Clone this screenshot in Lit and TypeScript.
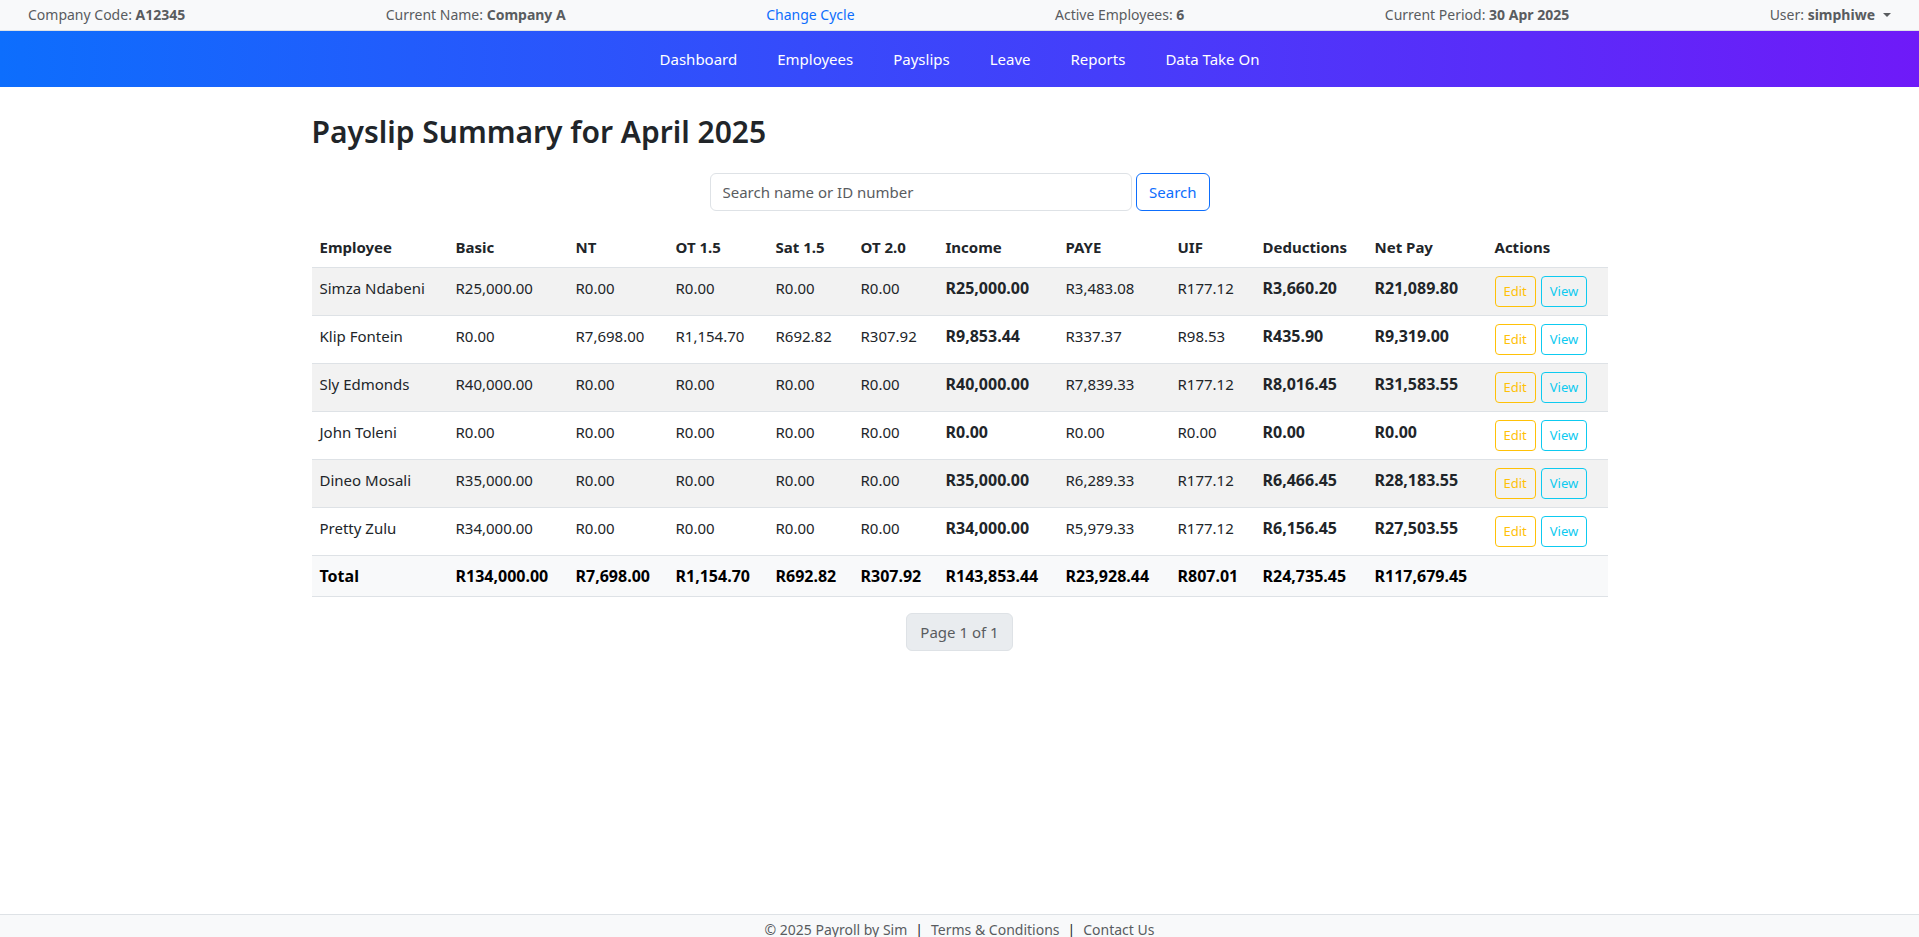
import { LitElement, html, css } from "lit";
import { customElement } from "lit/decorators.js";

type Row = { name: string; cells: string[] };

const columns = [
  "Employee", "Basic", "NT", "OT 1.5", "Sat 1.5", "OT 2.0",
  "Income", "PAYE", "UIF", "Deductions", "Net Pay", "Actions",
];

const colSizes = [
  "col-name", "col-sum", "col-hours", "col-hours", "col-rate", "col-rate",
  "col-sum", "col-tax", "col-rate", "col-tax", "col-sum", "col-actions",
];

// Index of the cells that are set in bold: Income, Deductions, Net Pay.
const strongCells = new Set([5, 8, 9]);

const rows: Row[] = [
  { name: "Simza Ndabeni", cells: ["R25,000.00", "R0.00", "R0.00", "R0.00", "R0.00", "R25,000.00", "R3,483.08", "R177.12", "R3,660.20", "R21,089.80"] },
  { name: "Klip Fontein", cells: ["R0.00", "R7,698.00", "R1,154.70", "R692.82", "R307.92", "R9,853.44", "R337.37", "R98.53", "R435.90", "R9,319.00"] },
  { name: "Sly Edmonds", cells: ["R40,000.00", "R0.00", "R0.00", "R0.00", "R0.00", "R40,000.00", "R7,839.33", "R177.12", "R8,016.45", "R31,583.55"] },
  { name: "John Toleni", cells: ["R0.00", "R0.00", "R0.00", "R0.00", "R0.00", "R0.00", "R0.00", "R0.00", "R0.00", "R0.00"] },
  { name: "Dineo Mosali", cells: ["R35,000.00", "R0.00", "R0.00", "R0.00", "R0.00", "R35,000.00", "R6,289.33", "R177.12", "R6,466.45", "R28,183.55"] },
  { name: "Pretty Zulu", cells: ["R34,000.00", "R0.00", "R0.00", "R0.00", "R0.00", "R34,000.00", "R5,979.33", "R177.12", "R6,156.45", "R27,503.55"] },
];

const totals = ["R134,000.00", "R7,698.00", "R1,154.70", "R692.82", "R307.92", "R143,853.44", "R23,928.44", "R807.01", "R24,735.45", "R117,679.45"];

const navItems = ["Dashboard", "Employees", "Payslips", "Leave", "Reports", "Data Take On"];

@customElement("app-root")
export class AppRoot extends LitElement {
  static styles = css`
    :host {
      display: flex;
      flex-direction: column;
      min-height: 100vh;
      background: #fff;
      color: #212529;
      font-family: "Noto Sans", "Open Sans", sans-serif;
      font-size: 15px;
      line-height: 24px;
    }
    * { box-sizing: border-box; }
    a { text-decoration: none; color: inherit; }
    button, input { font: inherit; }

    .topbar {
      display: flex;
      justify-content: space-between;
      padding: 4px 28px 5px;
      background: #f8f9fa;
      border-bottom: 1px solid #dee2e6;
      color: #595c5f;
      font-size: 14px;
      line-height: 21px;
    }
    .topbar .cycle { color: #0d6efd; }
    .user {
      display: flex;
      align-items: center;
      gap: 8px;
      padding: 0;
      border: 0;
      background: none;
      color: inherit;
      line-height: 21px;
    }
    .caret {
      border-top: 4px solid currentColor;
      border-left: 4px solid transparent;
      border-right: 4px solid transparent;
    }

    .nav {
      display: flex;
      justify-content: center;
      gap: 40px;
      padding: 16px;
      background: linear-gradient(90deg, #0d6efd, #6f1af8);
      color: #fff;
    }

    .main {
      flex: 1;
      width: 100%;
      max-width: 1320px;
      margin: 0 auto;
      padding: 26px 12px;
    }
    .title {
      margin: 0 0 22px;
      font-size: 30px;
      line-height: 38px;
      font-weight: 600;
    }
    .search {
      display: flex;
      gap: 4px;
      max-width: 500px;
      margin: 0 auto 16px;
    }
    .field {
      flex: 1;
      min-width: 0;
      height: 38px;
      padding: 6px 12px;
      border: 1px solid #dee2e6;
      border-radius: 6px;
      color: #212529;
      outline: none;
    }
    .field::placeholder { color: #595c5f; opacity: 1; }
    .submit {
      padding: 6px 12px;
      border: 1px solid #0d6efd;
      border-radius: 6px;
      background: #fff;
      color: #0d6efd;
    }

    .table {
      width: 100%;
      table-layout: fixed;
      border-collapse: separate;
      border-spacing: 0;
    }
    .table th, .table td {
      padding: 8px;
      border-bottom: 1px solid #dee2e6;
      text-align: left;
      vertical-align: top;
      white-space: nowrap;
    }
    .table thead th { font-weight: 700; }
    .table tbody th { font-weight: 400; }
    .table .bold { font-size: 16px; font-weight: 700; }
    .table tbody tr:nth-child(odd) > * { background: #f2f2f2; }
    .table tfoot th, .table tfoot td {
      background: #f8f9fa;
      color: #000;
      font-size: 16px;
      font-weight: 700;
    }
    .col-name { width: 136px; }
    .col-sum { width: 120px; }
    .col-hours { width: 100px; }
    .col-rate { width: 85px; }
    .col-tax { width: 112px; }
    .col-actions { width: 121px; }

    .actions { display: flex; gap: 5px; }
    .btn {
      padding: 4px 8px;
      border: 1px solid currentColor;
      border-radius: 4px;
      font-size: 13px;
      line-height: 21px;
    }
    .edit { color: #ffc107; }
    .view { color: #0dcaf0; }

    .pager {
      display: flex;
      justify-content: center;
      margin-top: 16px;
    }
    .page {
      padding: 6px 13px;
      border: 1px solid #dee2e6;
      border-radius: 6px;
      background: #e9ecef;
      color: #595c5f;
    }

    .footer {
      display: flex;
      justify-content: center;
      gap: 8px;
      padding-top: 7px;
      border-top: 1px solid #dee2e6;
      background: #f8f9fa;
      color: #595c5f;
      font-size: 14px;
      line-height: 15px;
    }
    .bar { color: #212529; }
  `;

  render() {
    return html`
      <header>
        <div class="topbar">
          <span>Company Code: <strong>A12345</strong></span>
          <span>Current Name: <strong>Company A</strong></span>
          <a class="cycle" href="#">Change Cycle</a>
          <span>Active Employees: <strong>6</strong></span>
          <span>Current Period: <strong>30 Apr 2025</strong></span>
          <button class="user" type="button">
            <span>User: <strong>simphiwe</strong></span><span class="caret"></span>
          </button>
        </div>
        <nav class="nav">
          ${navItems.map((item) => html`<a href="#">${item}</a>`)}
        </nav>
      </header>
      <main class="main">
        <h2 class="title">Payslip Summary for April 2025</h2>
        <form class="search" @submit=${(e: Event) => e.preventDefault()}>
          <input class="field" type="text" name="q" aria-label="Search name or ID number" placeholder="Search name or ID number" />
          <button class="submit" type="submit">Search</button>
        </form>
        <table class="table">
          <colgroup>${colSizes.map((c) => html`<col class=${c} />`)}</colgroup>
          <thead>
            <tr>${columns.map((c) => html`<th scope="col">${c}</th>`)}</tr>
          </thead>
          <tbody>
            ${rows.map((row) => html`
              <tr>
                <th scope="row">${row.name}</th>
                ${row.cells.map((v, i) => html`<td class=${strongCells.has(i) ? "bold" : ""}>${v}</td>`)}
                <td>
                  <div class="actions">
                    <a class="btn edit" href="#">Edit</a>
                    <a class="btn view" href="#">View</a>
                  </div>
                </td>
              </tr>`)}
          </tbody>
          <tfoot>
            <tr>
              <th scope="row">Total</th>
              ${totals.map((v) => html`<td>${v}</td>`)}
              <td></td>
            </tr>
          </tfoot>
        </table>
        <div class="pager"><span class="page">Page 1 of 1</span></div>
      </main>
      <footer class="footer">
        <span>© 2025 Payroll by Sim</span>
        <span class="bar">|</span>
        <a href="#">Terms &amp; Conditions</a>
        <span class="bar">|</span>
        <a href="#">Contact Us</a>
      </footer>
    `;
  }
}
